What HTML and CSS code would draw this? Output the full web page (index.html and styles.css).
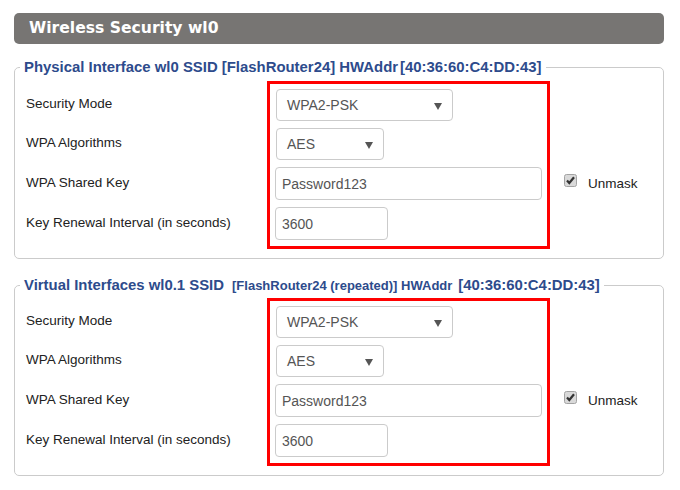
FILE: index.html
```html
<!DOCTYPE html>
<html lang="en">
<head>
    <meta charset="UTF-8">
    <meta name="viewport" content="width=device-width, initial-scale=1.0">
    <link rel="stylesheet" href="styles.css">
</head>
<body>
    <div class="panel">
        <div class="panel-title">Wireless Security wl0</div>

        <fieldset class="iface">
            <legend>Physical Interface wl0 SSID [FlashRouter24] HWAddr<span class="mac first">[40:36:60:C4:DD:43]</span></legend>
            <div class="form">
                <div class="labels">
                    <div class="label sel">Security Mode</div>
                    <div class="label sel">WPA Algorithms</div>
                    <div class="label txt">WPA Shared Key</div>
                    <div class="label txt">Key Renewal Interval (in seconds)</div>
                </div>
                <div class="fields">
                    <div class="select mode"><span>WPA2-PSK</span><i class="arrow"></i></div>
                    <div class="select algo"><span>AES</span><i class="arrow"></i></div>
                    <div class="input key">Password123</div>
                    <div class="input renew">3600</div>
                </div>
                <div class="unmask">
                    <svg class="check" width="13" height="13" viewBox="0 0 13 13">
                        <rect x="0.5" y="0.5" width="12" height="12" rx="2" fill="#d9d9d9" stroke="#a3a3a3"/>
                        <path d="M3 6.5 L5.3 9 L10 3.2" fill="none" stroke="#333" stroke-width="2.2"/>
                    </svg>
                    <span>Unmask</span>
                </div>
            </div>
        </fieldset>

        <fieldset class="iface second">
            <legend>Virtual Interfaces wl0.1 SSID<span class="small">[FlashRouter24 (repeated)] HWAddr</span><span class="mac">[40:36:60:C4:DD:43]</span></legend>
            <div class="form">
                <div class="labels">
                    <div class="label sel">Security Mode</div>
                    <div class="label sel">WPA Algorithms</div>
                    <div class="label txt">WPA Shared Key</div>
                    <div class="label txt">Key Renewal Interval (in seconds)</div>
                </div>
                <div class="fields">
                    <div class="select mode"><span>WPA2-PSK</span><i class="arrow"></i></div>
                    <div class="select algo"><span>AES</span><i class="arrow"></i></div>
                    <div class="input key">Password123</div>
                    <div class="input renew">3600</div>
                </div>
                <div class="unmask">
                    <svg class="check" width="13" height="13" viewBox="0 0 13 13">
                        <rect x="0.5" y="0.5" width="12" height="12" rx="2" fill="#d9d9d9" stroke="#a3a3a3"/>
                        <path d="M3 6.5 L5.3 9 L10 3.2" fill="none" stroke="#333" stroke-width="2.2"/>
                    </svg>
                    <span>Unmask</span>
                </div>
            </div>
        </fieldset>
    </div>
</body>
</html>
```

FILE: styles.css
```css
body {
    margin: 0;
    background: #fff;
    font-family: "Liberation Sans", Arial, sans-serif;
    color: #222;
}
.panel {
    width: 650px;
    padding: 13px 0 0 14px;
}
.panel-title {
    height: 31px;
    line-height: 31px;
    padding-left: 15px;
    background-color: #777573;
    border-radius: 5px;
    color: #fff;
    font-family: "DejaVu Sans", Verdana, sans-serif;
    font-weight: bold;
    font-size: 15.6px;
}

/* one interface block */
.iface {
    margin: 15px 0 0;
    padding: 5px 0 9px 0;
    border: 1px solid #cbcbcb;
    border-radius: 5px;
    min-width: 0;
}
.iface.second {
    margin-top: 18px;
    padding-top: 4px;
    padding-bottom: 9px;
}
.iface legend {
    padding: 0 4px;
    margin-left: 5px;
    color: #2d4b8c;
    font-weight: bold;
    font-size: 14.9px;
    line-height: 17px;
}
.iface legend .small {
    font-size: 13px;
    margin-left: 8px;
}
.iface legend .mac {
    margin-left: 6px;
}
.iface legend .mac.first {
    margin-left: 2px;
}

.form {
    display: flex;
    align-items: flex-start;
    padding-left: 11px;
}
.labels {
    width: 241px;
    padding-top: 8px;
    display: flex;
    flex-direction: column;
    gap: 7px;
}
.label {
    display: flex;
    align-items: center;
    padding-bottom: 3px;
    box-sizing: border-box;
    font-size: 13.5px;
}
.label.sel { height: 32px; }
.label.txt { height: 33px; }

/* red highlight around the inputs */
.fields {
    border: 3px solid #ff0000;
    padding: 5px 5px 6px 5px;
    width: 267px;
    display: flex;
    flex-direction: column;
    align-items: flex-start;
    gap: 7px;
}
.select, .input {
    box-sizing: border-box;
    border: 1px solid #cbcbcb;
    border-radius: 4px;
    background: #fff;
    color: #555;
    font-size: 14px;
    display: flex;
    align-items: center;
}
.select {
    height: 32px;
    margin-left: 1px;
    padding: 0 10px 0 10px;
    justify-content: space-between;
}
.select.mode { width: 177px; }
.select.algo { width: 108px; }
.arrow {
    width: 0;
    height: 0;
    border-left: 4px solid transparent;
    border-right: 4px solid transparent;
    border-top: 7px solid #555;
    margin-top: 2px;
}
.input {
    height: 33px;
    padding-left: 6px;
}
.input.key { width: 267px; }
.input.renew { width: 113px; }

.unmask {
    margin-left: 14px;
    margin-top: 86px;
    height: 33px;
    display: flex;
    align-items: center;
    gap: 11px;
    font-size: 13.5px;
}
.unmask .check {
    margin-bottom: 6px;
}
```
